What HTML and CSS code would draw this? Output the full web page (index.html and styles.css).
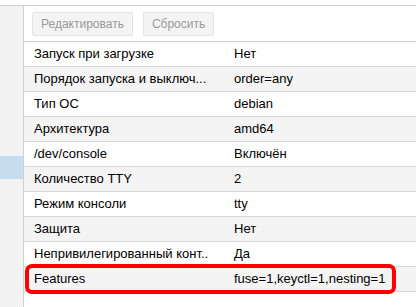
FILE: index.html
```html
<!DOCTYPE html>
<html lang="ru">
<head>
    <meta charset="UTF-8">
    <title>Параметры</title>
    <link rel="stylesheet" href="styles.css">
</head>
<body>
    <div class="layout">
        <div class="side">
            <div class="side-item"></div>
        </div>
        <div class="main">
            <div class="toolbar">
                <button class="btn" disabled>Редактировать</button>
                <button class="btn" disabled>Сбросить</button>
            </div>
            <div class="grid">
                <div class="row"><div class="cell">Запуск при загрузке</div><div class="cell">Нет</div></div>
                <div class="row alt"><div class="cell" title="Порядок запуска и выключения">Порядок запуска и выключ...</div><div class="cell">order=any</div></div>
                <div class="row"><div class="cell">Тип ОС</div><div class="cell">debian</div></div>
                <div class="row alt"><div class="cell">Архитектура</div><div class="cell">amd64</div></div>
                <div class="row"><div class="cell">/dev/console</div><div class="cell">Включён</div></div>
                <div class="row alt"><div class="cell">Количество TTY</div><div class="cell">2</div></div>
                <div class="row"><div class="cell">Режим консоли</div><div class="cell">tty</div></div>
                <div class="row alt"><div class="cell">Защита</div><div class="cell">Нет</div></div>
                <div class="row"><div class="cell" title="Непривилегированный контейнер">Непривилегированный конт..</div><div class="cell">Да</div></div>
                <div class="row alt marked"><div class="cell">Features</div><div class="cell">fuse=1,keyctl=1,nesting=1</div></div>
            </div>
        </div>
    </div>
</body>
</html>
```

FILE: styles.css
```css
body {
    margin: 0;
    font-family: 'Liberation Sans', Arial, sans-serif;
    font-size: 13px;
    color: #000;
    background: #fff;
    overflow: hidden;
}

.layout {
    display: flex;
    margin-top: 5px;
    border-top: 1px solid #d0d0d0;
    height: 301px;
}

.side {
    width: 24px;
    border-right: 1px solid #d0d0d0;
    background: repeating-conic-gradient(#eeeeee 0 25%, #f7f7f7 0 50%) 0 0 / 2px 2px;
    padding-top: 150px;
    box-sizing: border-box;
}

.side-item {
    height: 23px;
    background: #c6ddf0;
}

.main {
    flex: 1;
    min-width: 0;
}

.toolbar {
    height: 36px;
    box-sizing: border-box;
    padding: 6px 8px;
    display: flex;
    gap: 10px;
    border-bottom: 1px solid #d0d0d0;
}

.btn {
    height: 24px;
    padding: 0 8px;
    font-family: inherit;
    font-size: 12px;
    color: #9a9a9a;
    border: 1px solid #e4e4e4;
    border-radius: 2px;
    background: repeating-conic-gradient(#f0f0f0 0 25%, #f8f8f8 0 50%) 0 0 / 2px 2px;
}

.row {
    display: grid;
    grid-template-columns: 200px 1fr;
    height: 25px;
    box-sizing: border-box;
    border-bottom: 1px solid #d6d6d6;
    position: relative;
}

.row.alt {
    background: repeating-conic-gradient(#efefef 0 25%, #f9f9f9 0 50%) 0 0 / 2px 2px;
}

.cell {
    padding: 0 10px;
    line-height: 24px;
    white-space: nowrap;
}

.marked::after {
    content: '';
    position: absolute;
    left: 1px;
    right: 20px;
    top: -3px;
    bottom: -3px;
    border: 4px solid #ff0000;
    border-radius: 7px;
}
```
